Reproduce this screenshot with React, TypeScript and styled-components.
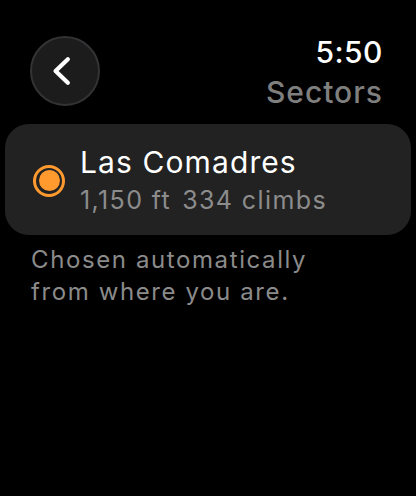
import styled, { createGlobalStyle } from "styled-components";

const GlobalStyle = createGlobalStyle`
  html, body {
    margin: 0;
    padding: 0;
    background: #000;
  }
  body {
    font-family: Inter, "Noto Sans", "Liberation Sans", sans-serif;
    -webkit-font-smoothing: antialiased;
  }
`;

const Screen = styled.div`
  width: 416px;
  height: 496px;
  background: #000;
  display: flex;
  flex-direction: column;
  overflow: hidden;
`;

const Header = styled.header`
  display: flex;
  justify-content: space-between;
  align-items: flex-start;
  padding: 34px 33px 0 30px;
`;

const BackButton = styled.button`
  width: 70px;
  height: 70px;
  margin-top: 2px;
  border-radius: 50%;
  border: 2px solid #333335;
  background: #1c1c1d;
  display: flex;
  align-items: center;
  justify-content: center;
  padding: 0;
  box-sizing: border-box;
  cursor: pointer;
`;

const TitleBlock = styled.div`
  display: flex;
  flex-direction: column;
  align-items: flex-end;
`;

const Time = styled.div`
  color: #fff;
  font-size: 30px;
  line-height: 36px;
  font-weight: 500;
  letter-spacing: 0.5px;
`;

const Title = styled.h1`
  margin: 4px 0 0;
  color: #7f7f7f;
  font-size: 30px;
  line-height: 36px;
  font-weight: 500;
  letter-spacing: 1px;
`;

const Card = styled.div`
  margin: 14px 5px 0;
  height: 111px;
  border-radius: 24px;
  background: #222222;
  display: flex;
  align-items: center;
  gap: 15px;
  padding-left: 28px;
  box-sizing: border-box;
`;

const Radio = styled.span`
  width: 32px;
  height: 32px;
  border-radius: 50%;
  border: 3px solid #ff9a2f;
  box-sizing: border-box;
  display: flex;
  align-items: center;
  justify-content: center;
  margin-top: 2px;

  &::after {
    content: "";
    width: 21px;
    height: 21px;
    border-radius: 50%;
    background: #ff9a2f;
  }
`;

const CardText = styled.div`
  display: flex;
  flex-direction: column;
  gap: 5px;
`;

const Name = styled.div`
  color: #fff;
  font-size: 30px;
  line-height: 36px;
  font-weight: 400;
  letter-spacing: 1.1px;
`;

const Meta = styled.div`
  color: #8c8c8c;
  font-size: 25px;
  line-height: 30px;
  letter-spacing: 1.4px;
  display: flex;
  gap: 11px;
`;

const Note = styled.p`
  margin: 9px 0 0 31px;
  color: #8b8b8b;
  font-size: 24px;
  line-height: 32px;
  letter-spacing: 1.6px;
`;

export default function App() {
  return (
    <Screen>
      <GlobalStyle />
      <Header>
        <BackButton aria-label="Back">
          <svg width="70" height="70" viewBox="0 0 70 70" fill="none">
            <path
              d="M38 22.5 L25 35 L38 47.5"
              stroke="#fff"
              strokeWidth="4.5"
              strokeLinecap="round"
              strokeLinejoin="round"
            />
          </svg>
        </BackButton>
        <TitleBlock>
          <Time>5:50</Time>
          <Title>Sectors</Title>
        </TitleBlock>
      </Header>
      <Card>
        <Radio />
        <CardText>
          <Name>Las Comadres</Name>
          <Meta>
            <span>1,150 ft</span>
            <span>334 climbs</span>
          </Meta>
        </CardText>
      </Card>
      <Note>
        Chosen automatically
        <br />
        from where you are.
      </Note>
    </Screen>
  );
}
